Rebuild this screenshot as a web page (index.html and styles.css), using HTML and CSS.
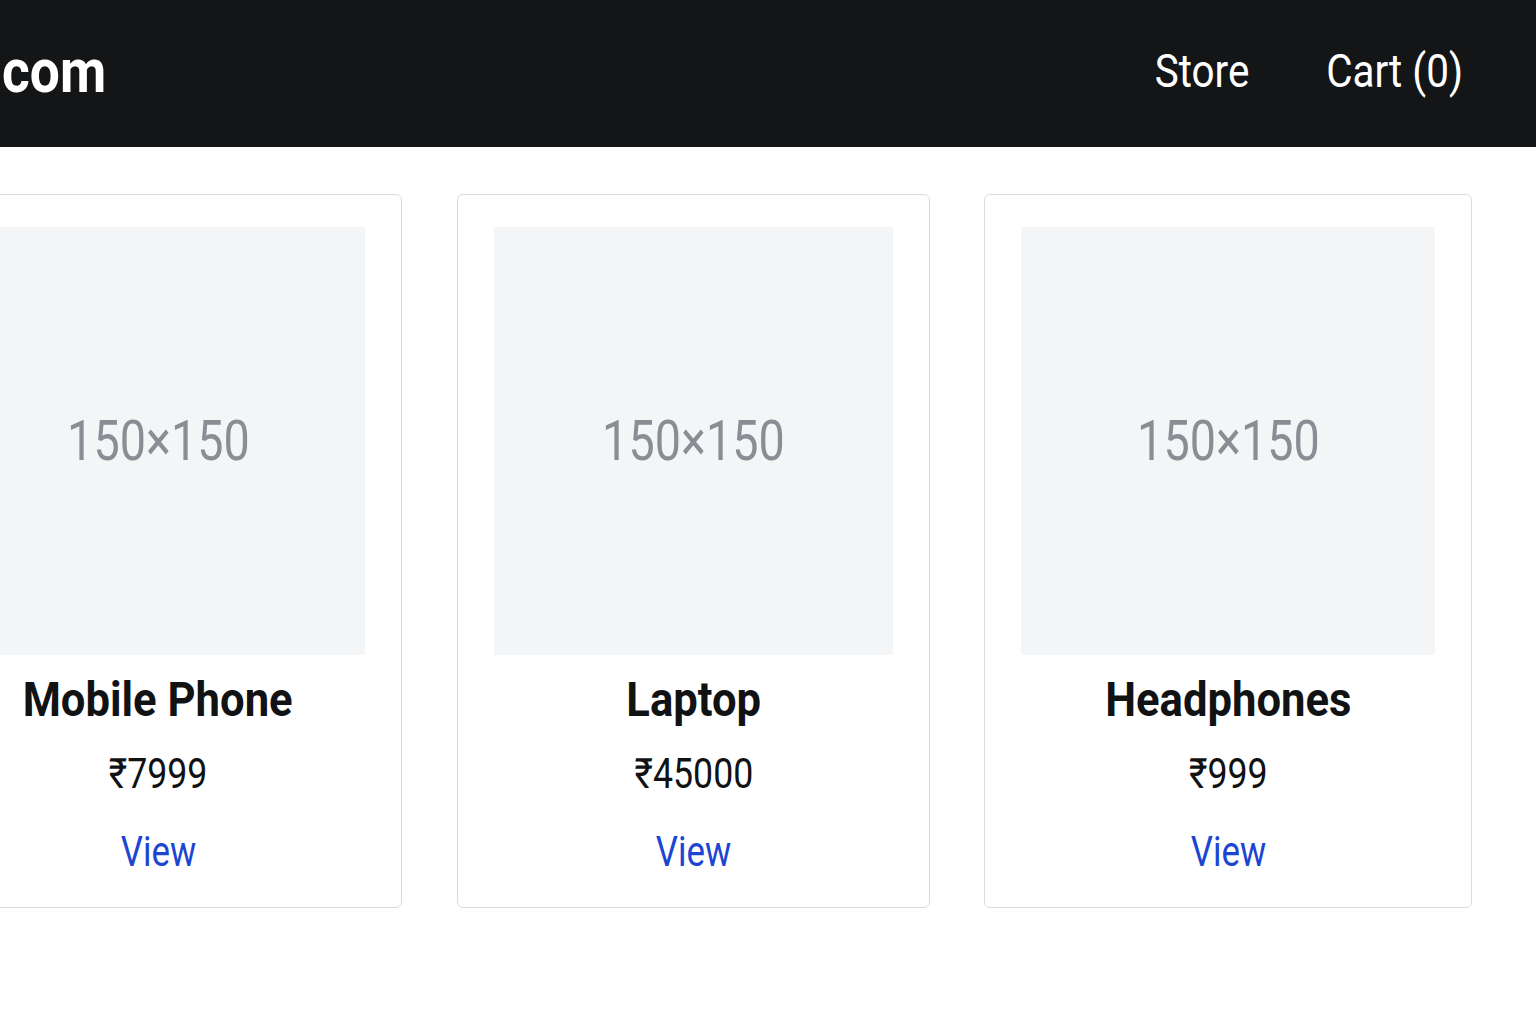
FILE: index.html
```html
<!DOCTYPE html>
<html lang="en">
<head>
<meta charset="utf-8">
<title>Store</title>
<link rel="stylesheet" href="styles.css">
</head>
<body>
<header class="topbar">
  <div class="logo">com</div>
  <nav class="nav">
    <a class="nav-link" href="#">Store</a>
    <a class="nav-link" href="#">Cart (0)</a>
  </nav>
</header>
<main class="products">
  <div class="card card-wide">
    <div class="thumb"><span class="thumb-label">150×150</span></div>
    <h2 class="title">Mobile Phone</h2>
    <p class="price">₹7999</p>
    <a class="view" href="#">View</a>
  </div>
  <div class="card card-mid">
    <div class="thumb"><span class="thumb-label">150×150</span></div>
    <h2 class="title">Laptop</h2>
    <p class="price">₹45000</p>
    <a class="view" href="#">View</a>
  </div>
  <div class="card card-wide card-last">
    <div class="thumb"><span class="thumb-label">150×150</span></div>
    <h2 class="title">Headphones</h2>
    <p class="price">₹999</p>
    <a class="view" href="#">View</a>
  </div>
</main>
</body>
</html>
```

FILE: styles.css
```css
* { box-sizing: border-box; }

html, body {
  margin: 0;
  padding: 0;
  background: #ffffff;
  overflow: hidden;
}

body {
  width: 1536px;
  height: 1024px;
  font-family: "Roboto", "Noto Sans", sans-serif;
  color: #111214;
}

.topbar {
  height: 147px;
  background: #141517;
  display: flex;
  align-items: center;
  justify-content: space-between;
  padding: 0 62px 6px 0;
}

.logo {
  color: #ffffff;
  font-weight: 700;
  font-size: 62px;
  line-height: 1;
  margin-left: 2px;
  transform: scaleX(0.86);
  transform-origin: left center;
}

.nav {
  display: flex;
  align-items: center;
  gap: 58px;
}

.nav-link {
  display: inline-block;
  color: #ffffff;
  text-decoration: none;
  font-size: 47px;
  line-height: 1;
  transform: scaleX(0.86);
  transform-origin: center center;
}

.products {
  display: flex;
  align-items: flex-start;
  gap: 55px;
  margin: 47px 0 0 -86px;
}

.card {
  flex: none;
  border: 1px solid #d9dde3;
  border-radius: 6px;
  padding: 32px 36px 31px;
  display: flex;
  flex-direction: column;
  align-items: center;
  text-align: center;
  background: #ffffff;
}

.card-wide { width: 488px; }
.card-mid { width: 473px; }
.card-last { margin-left: -1px; }

.thumb {
  align-self: stretch;
  height: 428px;
  background: #f4f5f7;
  display: flex;
  align-items: center;
  justify-content: center;
}

.thumb-label {
  display: inline-block;
  color: #8a8d93;
  font-size: 55px;
  line-height: 1;
  transform: scaleX(0.85);
}

.title {
  margin: 17px 0 0;
  font-size: 49px;
  font-weight: 700;
  line-height: 56px;
  color: #111214;
  transform: scaleX(0.89);
}

.price {
  margin: 22px 0 0;
  font-size: 42px;
  line-height: 48px;
  color: #111214;
  transform: scaleX(0.85);
}

.view {
  display: inline-block;
  margin-top: 30px;
  font-size: 42px;
  line-height: 48px;
  color: #1b45d2;
  text-decoration: none;
  transform: scaleX(0.83);
}
```
